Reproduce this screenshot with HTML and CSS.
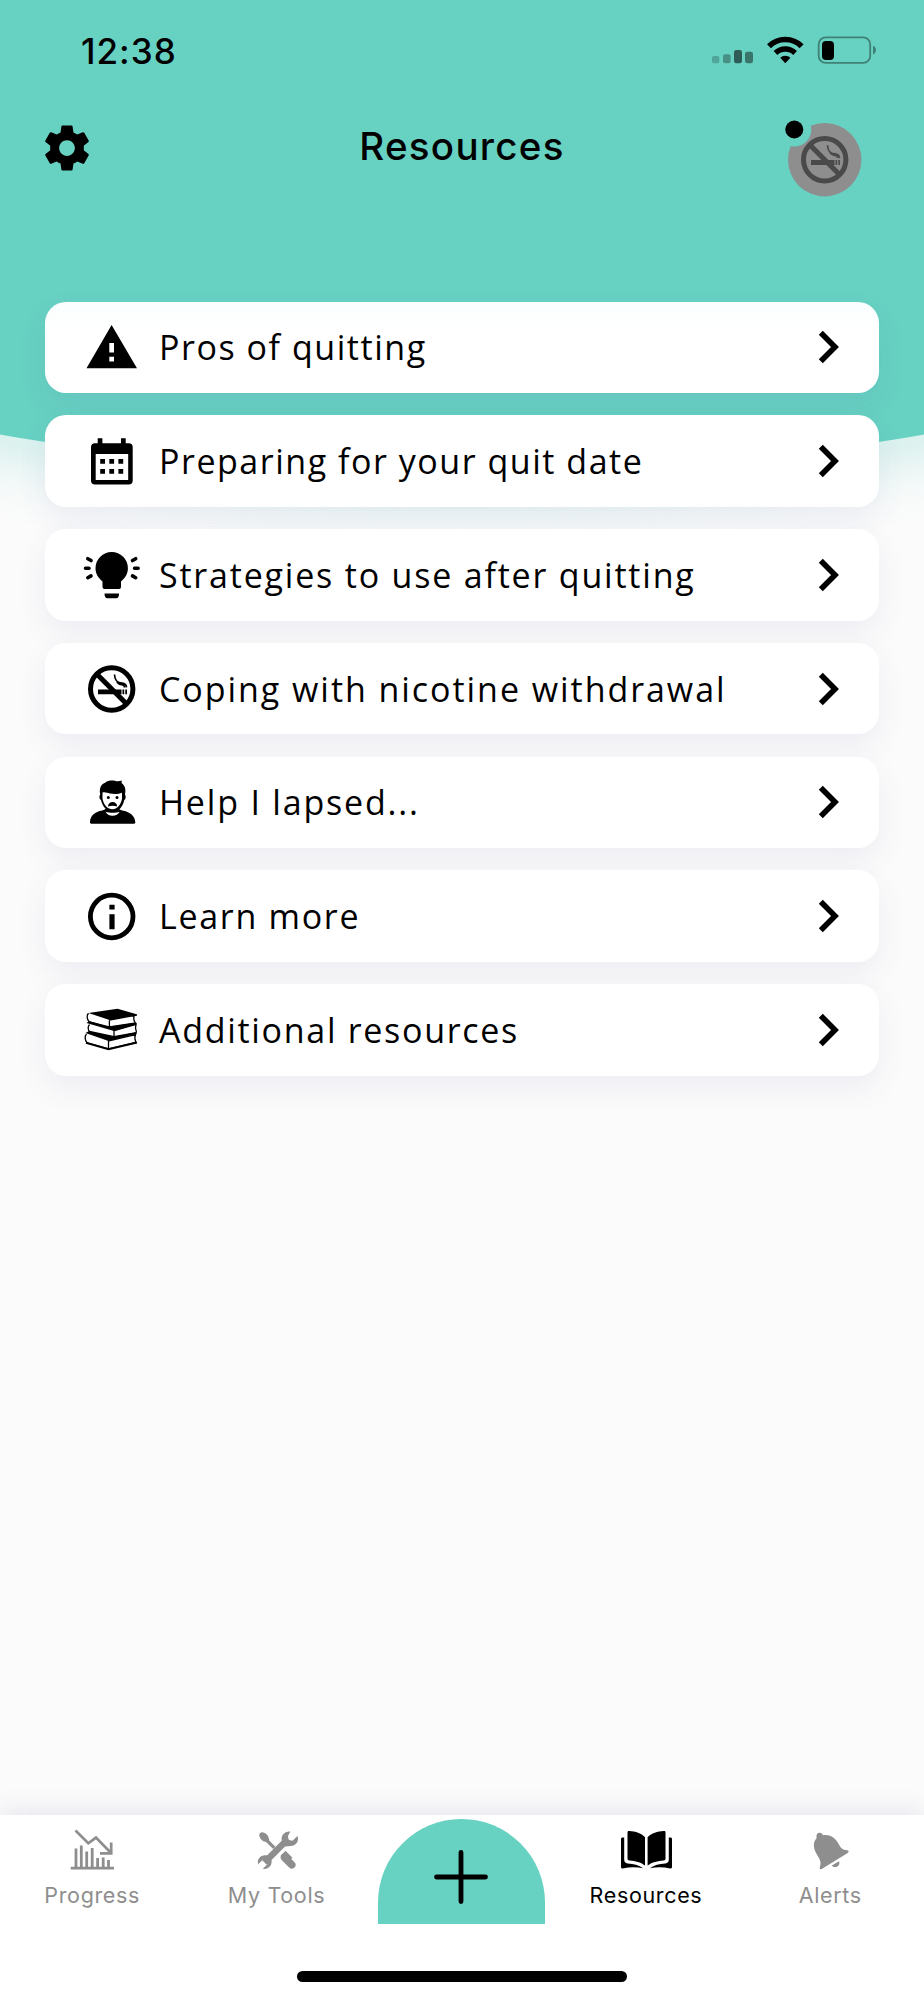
FILE: index.html
```html
<!DOCTYPE html>
<html lang="en">
<head>
<meta charset="utf-8">
<title>Resources</title>
<link rel="stylesheet" href="styles.css">
</head>
<body>
<svg width="0" height="0" class="defs">
  <symbol id="nosmoke" viewBox="0 0 60 60">
    <path d="M17 30.4h23.5v4.8H17zM41.5 30.4h1.700v4.800h-1.700zM44.300 30.400h1.700v4.800h-1.700z" fill="currentColor"/>
    <path d="M33.500 15.500c.2 6.500 3 8.200 7.500 8.700 3 .4 4.400 1.800 4.500 4.200M36 22.500c1.500 3 3.500 3 5.500 3.300 1.500.3 2 1.200 2 2.600" fill="none" stroke="currentColor" stroke-width="1.700"/>
    <circle cx="30.700" cy="30" r="21.200" fill="none" stroke="currentColor" stroke-width="5"/>
    <path d="M16 15.300l29.400 29.400" stroke="currentColor" stroke-width="5"/>
  </symbol>
  <symbol id="chev" viewBox="0 0 24 36"><path d="M3.800 3.700L18 18 3.800 32.300" fill="none" stroke="#000" stroke-width="5.600"/></symbol>
</svg>
<div class="screen">
  <div class="hero"></div>
  <div class="status">
    <span class="time">12:38</span>
    <svg class="status-icons" width="168" height="32" viewBox="710 34 168 32">
      <rect x="712" y="56" width="7.300" height="7.300" rx="2" fill="#51a59a"/>
      <rect x="723" y="54.300" width="7.600" height="9" rx="2" fill="#488f86"/>
      <rect x="734" y="50" width="8" height="13.300" rx="2.300" fill="#2d5d56"/>
      <rect x="745" y="51.700" width="8" height="11.600" rx="2.300" fill="#3a756c"/>
      <path d="M769 46.300a23 23 0 0 1 32.600 0" fill="none" stroke="#000" stroke-width="5.600"/>
      <path d="M775.500 53a14 14 0 0 1 19.600 0" fill="none" stroke="#000" stroke-width="5.300"/>
      <path d="M780.200 57.800a7.200 7.200 0 0 1 10.200 0l-5.100 5.400z"/>
      <rect x="818.700" y="37.400" width="51.500" height="25.500" rx="7" fill="none" stroke="#3f8176" stroke-width="1.800"/>
      <rect x="822" y="41" width="12" height="19" rx="4"/>
      <path d="M873 45.800c4 1.500 4 7 0 8.700z" fill="#3f8176"/>
    </svg>
  </div>
  <header class="top">
    <svg class="gear" width="54" height="54" viewBox="0 0 24 24"><path d="M19.430 12.980c.04-.32.07-.64.07-.98s-.03-.66-.07-.98l2.110-1.650c.19-.15.24-.42.12-.64l-2-3.460c-.12-.22-.39-.3-.61-.22l-2.490 1c-.52-.4-1.080-.73-1.690-.98l-.38-2.650C14.460 2.180 14.250 2 14 2h-4c-.25 0-.46.18-.49.42l-.38 2.650c-.61.25-1.170.59-1.690.98l-2.490-1c-.23-.09-.49 0-.61.22l-2 3.460c-.13.22-.07.49.12.64l2.110 1.650c-.04.32-.07.65-.07.98s.03.66.07.98l-2.110 1.650c-.19.15-.24.42-.12.64l2 3.460c.12.22.39.3.61.22l2.490-1c.52.4 1.080.73 1.690.98l.38 2.650c.03.24.24.42.49.42h4c.25 0 .46-.18.49-.42l.38-2.650c.61-.25 1.170-.59 1.690-.98l2.490 1c.23.09.49 0 .61-.22l2-3.460c.12-.22.07-.49-.12-.64zM12 15.500c-1.930 0-3.500-1.570-3.500-3.500s1.570-3.500 3.500-3.500 3.500 1.570 3.500 3.500-1.570 3.500-3.500 3.500z"/></svg>
    <h1>Resources</h1>
    <svg class="badge" width="80" height="84" viewBox="784 118 80 84">
      <circle cx="824.700" cy="159.700" r="36.700" fill="#8e8e8e"/>
      <circle cx="794.300" cy="129.500" r="17" fill="#67d1c2"/>
      <circle cx="794.300" cy="129.500" r="9"/>
      <use href="#nosmoke" x="794" y="129.700" width="60" height="60" color="#4a4a4a"/>
    </svg>
  </header>
  <main class="list">
    <div class="card first"><svg class="ico" viewBox="0 0 60 60"><path fill-rule="evenodd" d="M30.600 8L56 51.300H5.500zM28.300 26v9.500H33V26zM28.300 39.700v4.700H33v-4.700z"/></svg><span class="label t1">Pros of quitting</span><svg class="chev"><use href="#chev"/></svg></div>
    <div class="card"><svg class="ico" viewBox="0 0 60 60"><path fill-rule="evenodd" d="M14 12.300h2.700V7.200h4.700v5.100H40V7.200h4.700v5.100h3a4 4 0 0 1 4 4v33.200a4 4 0 0 1-4 4H14a4 4 0 0 1-4-4V16.300a4 4 0 0 1 4-4zM14.700 23v26h32.500V23z"/><path d="M19.200 28H24v4.800h-4.800zM28.300 28h4.800v4.800h-4.800zM37.400 28h4.800v4.800h-4.800zM19.200 38H24v4.800h-4.800zM28.300 38h4.800v4.800h-4.800zM37.400 38h4.800v4.800h-4.800z"/></svg><span class="label t2">Preparing for your quit date</span><svg class="chev"><use href="#chev"/></svg></div>
    <div class="card"><svg class="ico" viewBox="0 0 60 60"><path d="M30.700 7a16.200 16.200 0 0 1 16.200 16.200c0 5.300-2.400 9.500-6.900 13.300V42a2 2 0 0 1-2 2H23.500a2 2 0 0 1-2-2v-5.500c-4.500-3.800-7-8-7-13.300A16.200 16.200 0 0 1 30.700 7zM23.500 48.500h14.600c0 3-1 4.700-2.800 4.700h-9c-1.800 0-2.800-1.700-2.800-4.700z"/><path d="M4.500 23.200h3.500M53.600 23.200h3.500M6.800 13.700l3.200 1.800M54.700 13.700l-3.200 1.800M6.800 32.700l3.200-1.800M54.700 32.700l-3.200-1.800" stroke="#000" stroke-width="3.600" stroke-linecap="round"/></svg><span class="label t3">Strategies to use after quitting</span><svg class="chev"><use href="#chev"/></svg></div>
    <div class="card"><svg class="ico" viewBox="0 0 60 60"><use href="#nosmoke" width="60" height="60"/></svg><span class="label t4">Coping with nicotine withdrawal</span><svg class="chev"><use href="#chev"/></svg></div>
    <div class="card"><svg class="ico" viewBox="0 0 60 60"><path d="M9 50.500c0-7 5-10.500 11-11.800 3-.7 5-1.500 5.500-3.500L37 35c.5 2.200 2.500 3 5.500 3.700 6 1.300 11.800 5 11.800 11.800 0 .8-.5 1.200-1.300 1.200H10.300c-.8 0-1.300-.4-1.300-1.200z"/><path d="M24.500 39.800c1.500 2.800 3.600 4 7 4s5.600-1.200 7.200-4c-4 1.400-10 1.400-14.200 0z" fill="#fff"/><path d="M20 28c-2-1-1.800-4.200-.8-5.500-1.300-7 1.300-10.500 5.300-12 2.200-2.300 7.500-2.200 10-1.500 2.200.4 4 .2 6.500-.5-.6 1.300-.5 2-.2 2.800 3.500 2.500 4.200 6.500 3.200 11.200 1.200 2 .8 4.700-.8 5.700-1.500 7-6 11.500-11.500 11.500S21.500 35 20 28z"/><path d="M21.500 20.500c2.500-.8 4.500.3 7.500 1 4 .8 8.500.7 12-.7v6c-1.200 6.200-4.800 10.500-9.500 10.500s-8.600-4-10-10.500z" fill="#fff"/><circle cx="27.300" cy="25.600" r="1.500"/><circle cx="36" cy="25.600" r="1.500"/><path d="M27 34.500c.2-3 2-4.500 4.600-4.500s4.400 1.500 4.600 4.500c-3-1-6-1-9.200 0z"/></svg><span class="label t5">Help I lapsed...</span><svg class="chev"><use href="#chev"/></svg></div>
    <div class="card"><svg class="ico" viewBox="0 0 60 60"><circle cx="30.700" cy="30.500" r="21.300" fill="none" stroke="#000" stroke-width="4.800"/><path d="M28.400 18.800h5.200v4.800h-5.200zM28.400 28.200h5.200v15h-5.200z"/></svg><span class="label t6">Learn more</span><svg class="chev"><use href="#chev"/></svg></div>
    <div class="card"><svg class="ico" viewBox="0 0 60 60"><path d="M7.500 13L36.500 8.800 56.500 14.500 28.500 20z"/><path d="M7.500 13.300c-2 2.200-1.700 6 .5 8.200L28.300 27.500 55 23.300M28.400 20.500v7M53.300 15.500c-.8 2-.5 5 .8 7M28.400 20l27.500-5" fill="none" stroke="#000" stroke-width="1.300"/><path d="M5.500 23l2.500-1.700 20.300 5 26.700-4 .7 2L33 31z"/><path d="M8.500 24.500c-2 2-1.700 5.500.5 8L33 37.300l22-4.500M33 30.500v7M33 30.500l22-6.200c-.8 2.500-.7 5.500.5 8.300" fill="none" stroke="#000" stroke-width="1.300"/><path d="M4.500 33l4-2.200L33 36l22.500-4 .3 1.800L27.500 41z"/><path d="M5.500 33.800c-2 2.500-1.700 6.500.5 9l21.500 6L55 42.500M27.500 40.500v8M28 40.800l26.500-6.300c-1 2.300-.8 4.700.3 7.500" fill="none" stroke="#000" stroke-width="1.300"/><path d="M5 42.800l22.500 6.300L56 42.500" fill="none" stroke="#000" stroke-width="2"/></svg><span class="label t7">Additional resources</span><svg class="chev"><use href="#chev"/></svg></div>
  </main>
  <footer class="tabbar">
    <nav>
      <div class="tab"><svg viewBox="2 0 60 50"><path d="M16 45V26.500M21.300 45V23.500M26.700 45V29.500M32.200 45V26M37.600 45V36M43.200 45V35.500M48.500 45V38" stroke="#8e8e8e" stroke-width="2.800"/><path d="M10.700 46.200H54" stroke="#8e8e8e" stroke-width="2.800"/><path d="M15.500 8.500l12.800 12.800 7.700-5.700L51 31M40 31.300h11.200V20.500" fill="none" stroke="#8e8e8e" stroke-width="2.700"/></svg><span>Progress</span></div>
      <div class="tab"><svg viewBox="0 0 60 50"><g fill="none" stroke="#8e8e8e"><path d="M17.500 40.500L41 17" stroke-width="6.500"/><path d="M37.500 35.500l7.300 7.300" stroke-width="7.500" stroke-linecap="round"/><path d="M14.500 13l12.800 12.800" stroke-width="3.200"/></g><g fill="#8e8e8e"><path d="M13 11.200c1.500-1.800 5-.5 7 1.500 1.700 1.700 1.500 3.300 2.300 5l-2.500 2.500c-2-1-3.500-.7-5-2.300-2-2-3.500-5-1.800-6.700zM33.700 33.600l4.800-4.800 7 7-5.500 5z"/><path d="M43.300 9.500a7.500 7.500 0 0 0-8 10.500l3 4.500 5.500-.5c5.500 0 8.500-5.500 6.700-10l-5 4.800-3.800-.8-.8-3.800zM19.500 33.300c-5.500-1-9.800 3.500-8.400 9l5-4.800 3.700.8.900 3.800-5 4.700c6.500 1 10.300-4.500 8.500-9.500z"/></g></svg><span>My Tools</span></div>
      <div class="tab add"><svg class="plus" viewBox="0 0 54 54"><path d="M27 2.500v49M2.500 27h49" stroke="#000" stroke-width="4.800" stroke-linecap="round"/></svg></div>
      <div class="tab active"><svg viewBox="0 0 60 50"><path d="M11.500 10.500c0-1 .7-1.500 1.700-1.400 6.500.3 11.800 2 15.800 6.200v28.300c-4.500-3.800-9.500-4.600-15.500-5.200-1.300-.1-2-.8-2-2zM49.500 10.500c0-1-.7-1.500-1.700-1.400-6.500.3-12 2-16.200 6.200v28.300c4.500-3.800 10-4.600 16-5.200 1.300-.1 1.900-.8 1.900-2zM5 17c0-1.200 1.300-1.600 3.200-1.400v22.200c0 2.300 1.300 3.400 3.500 3.600 6 .5 11 1.500 15.500 4.800-7-1.400-13.500-1.300-20.500.2C5.500 46.700 5 46 5 45zM56 17c0-1.200-1.300-1.600-3.200-1.400v22.200c0 2.300-1.300 3.400-3.500 3.600-6 .5-11 1.500-15.500 4.800 7-1.400 13.500-1.300 20.500.2 1.200.3 1.700-.4 1.700-1.400z"/></svg><span>Resources</span></div>
      <div class="tab"><svg viewBox="0 0 60 50"><g fill="#8e8e8e"><path d="M16.700 16c-1.500-5.500 4.800-7 6.300-2.700 6.500-1 12 2 15.500 8.500 2.300 4.300 4 6.400 8.500 6.500 1.800.1 2.200 1.700.7 2.600L21.700 46.900c-1.500.9-2.400 0-1.800-1.800 1.300-4.200.7-6.600-1.800-10.500-4.800-7.500-5.900-13.700-1.400-18.600z"/><path d="M31.800 43.600l7.300-4.400c1.500 5-4.300 7.800-7.300 4.400z"/></g></svg><span>Alerts</span></div>
    </nav>
    <div class="home"></div>
  </footer>
</div>
</body>
</html>
```

FILE: styles.css
```css
* { box-sizing: border-box; }
body { margin: 0; background: #fbfbfb; font-family: Inter, sans-serif; color: #000; }
svg { display: block; flex: none; }
.defs { position: absolute; }
.screen { position: relative; width: 924px; height: 2000px; overflow: hidden; display: flex; flex-direction: column; }
/* Curved backdrop behind the header and first cards */
.hero { position: absolute; left: -50%; top: 0; width: 200%; height: 473px; background: #67d1c2; border-radius: 0 0 50% 50% / 0 0 288px 288px; box-shadow: 0 20px 60px rgba(103, 209, 194, 0.3); }
.status, .top, .list { position: relative; }
.status { height: 100px; padding: 34px 46px 0 81px; display: flex; justify-content: space-between; align-items: flex-start; }
.time { font-size: 35px; font-weight: 550; line-height: 34px; letter-spacing: 1px; }
.top { height: 201px; padding: 18px 60px 0 40px; display: grid; grid-template-columns: 80px 1fr 80px; align-items: start; }
.gear { margin-top: 2.500px; }
h1 { margin: 4px 0 0 20px; font-size: 38.500px; line-height: 48px; font-weight: 550; letter-spacing: 1.300px; text-align: center; }
.list { display: flex; flex-direction: column; gap: 22.300px; padding: 0 45px; margin-top: 0.500px; }
.card { height: 91.500px; background: #fff; border-radius: 21px; display: flex; align-items: center; padding: 0 38px 0 36px; box-shadow: 0 12px 30px rgba(80, 80, 150, 0.08); }
.first { background: linear-gradient(#fafefe, #fff 30px); }
.ico { width: 60px; height: 60px; }
.label { flex: 1; margin-left: 18px; font-family: "Open Sans", sans-serif; font-size: 34px; line-height: 48px; white-space: nowrap; }
.t1 { letter-spacing: 1.550px; }
.t2 { letter-spacing: 1.530px; }
.t3 { letter-spacing: 1.800px; }
.t4 { letter-spacing: 1.950px; }
.t5 { letter-spacing: 1.800px; }
.t6 { letter-spacing: 1.700px; }
.t7 { letter-spacing: 1.700px; }
.chev { width: 24px; height: 36px; }
.tabbar { position: relative; margin-top: auto; height: 185.300px; background: #fff; box-shadow: 0 -3px 24px rgba(80, 80, 150, 0.13); display: flex; flex-direction: column; align-items: center; }
nav { width: 100%; height: 156px; display: flex; padding: 4.300px 1.500px 0 0; }
.tab { flex: 1; display: flex; flex-direction: column; align-items: center; padding-top: 3px; color: #8e8e8e; font-size: 21.500px; line-height: 28px; letter-spacing: 0.650px; }
.tab svg { width: 60px; height: 50px; margin-bottom: 9px; }
.active { color: #000; }
.add { flex: 0 0 167px; height: 105px; margin: 0 9px; padding-top: 31px; background: #67d1c2; border-radius: 83.500px 83.500px 0 0; }
.tab .plus { width: 54px; height: 54px; }
.home { width: 330px; height: 11px; border-radius: 6px; background: #000; }
```
